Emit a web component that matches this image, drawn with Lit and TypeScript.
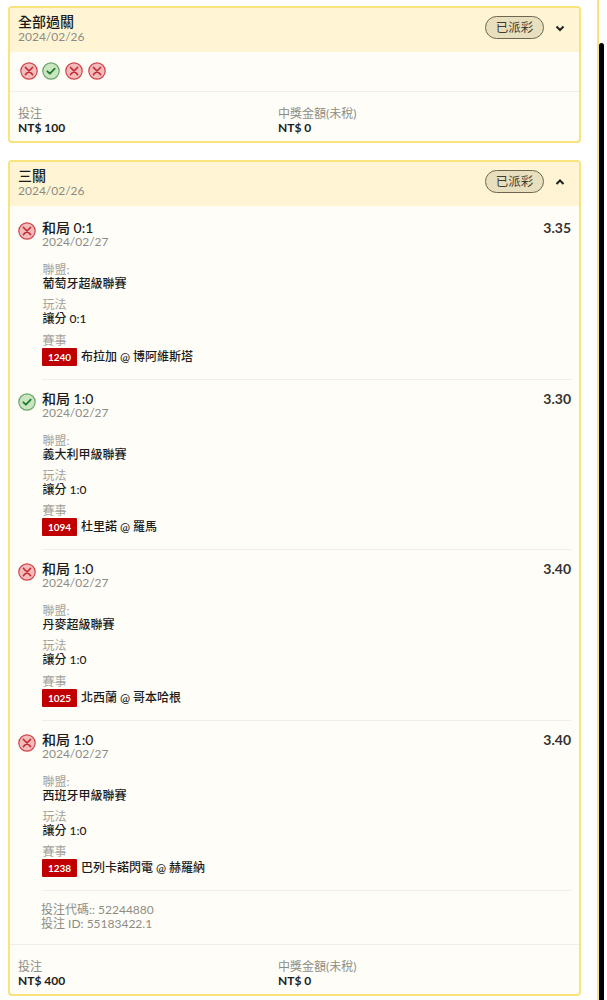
import { LitElement, html, css, svg } from "lit";
import { customElement } from "lit/decorators.js";

const ICON_X = svg`<circle cx="9" cy="9" r="8.2" fill="#f3bcbc" stroke="#d0454c" stroke-width="1.2"/><path d="M5.4 5.4l7.2 7.2M12.6 5.4l-7.2 7.2" fill="none" stroke="#c42f37" stroke-width="1.5" stroke-linecap="round"/>`;
const ICON_OK = svg`<circle cx="9" cy="9" r="8.2" fill="#c9e6c1" stroke="#6aa56c" stroke-width="1.2"/><path d="M5.4 9.3l2.5 2.4 4.8-5" fill="none" stroke="#1f7a2e" stroke-width="1.8" stroke-linecap="round" stroke-linejoin="round"/>`;

interface Leg { ok: boolean; title: string; odds: string; date: string; league: string; play: string; code: string; match: string; }
const LEGS: Leg[] = [
  { ok: false, title: "和局 0:1", odds: "3.35", date: "2024/02/27", league: "葡萄牙超級聯賽", play: "讓分 0:1", code: "1240", match: "布拉加 @ 博阿維斯塔" },
  { ok: true, title: "和局 1:0", odds: "3.30", date: "2024/02/27", league: "義大利甲級聯賽", play: "讓分 1:0", code: "1094", match: "杜里諾 @ 羅馬" },
  { ok: false, title: "和局 1:0", odds: "3.40", date: "2024/02/27", league: "丹麥超級聯賽", play: "讓分 1:0", code: "1025", match: "北西蘭 @ 哥本哈根" },
  { ok: false, title: "和局 1:0", odds: "3.40", date: "2024/02/27", league: "西班牙甲級聯賽", play: "讓分 1:0", code: "1238", match: "巴列卡諾閃電 @ 赫羅納" },
];

@customElement("app-root")
export class AppRoot extends LitElement {
  static styles = css`
    :host { display: block; position: relative; height: 1000px; overflow: hidden; background: #fff; color: #1c1c1c;
      font-family: Lato, "Noto Sans CJK TC", sans-serif; font-size: 12px; line-height: 14px; }
    .page { width: 573px; margin-left: 8px; padding-top: 6px; display: flex; flex-direction: column; gap: 17px; }
    .card { border: 2px solid #f8e37c; border-radius: 4px; background: #fffdf7; }
    .head { height: 44px; box-sizing: border-box; background: #fff5d5; padding: 6px 8px 0 8px; display: flex; align-items: flex-start; justify-content: space-between; }
    .title { font-size: 14px; line-height: 16px; color: #1a1a1a; font-weight: 500; }
    .date { font-size: 12px; line-height: 13px; color: #8b8b84; }
    .right { display: flex; align-items: center; gap: 10px; padding-top: 2px; }
    .pill { box-sizing: border-box; width: 59px; height: 23px; border: 1px solid #6e6750; border-radius: 12px; background: #e8dfbe;
      font-size: 12.5px; line-height: 21px; text-align: center; color: #3f3c30; }
    .chev { width: 12px; height: 12px; display: block; margin-right: 5px; }
    .icons { display: flex; gap: 4.7px; padding: 10px 9.5px 0; height: 29px; border-bottom: 1px solid #f1eee6; }
    .icons svg { width: 18px; height: 18px; }
    .foot { display: grid; grid-template-columns: 260px 1fr; padding: 15px 8px 7px; }
    .lab { font-size: 12px; line-height: 14px; color: #8d8d86; }
    .val { font-size: 12px; line-height: 13px; font-weight: 700; color: #1c1c1c; }
    .legs { padding: 3px 8px 0 8px; }
    .leg { display: flex; gap: 6.5px; }
    .leg > svg { width: 18px; height: 18px; flex: none; margin: 13px 0 0 -0.5px; }
    .body { flex: 1; box-sizing: border-box; padding-top: 11px; height: 170.5px; border-bottom: 1px solid #f1eee6; }
    .row { display: flex; justify-content: space-between; }
    .t2 { font-size: 14px; line-height: 16px; font-weight: 500; color: #1a1a1a; }
    .odds { font-size: 14px; line-height: 16px; font-weight: 700; color: #333; }
    .d2 { font-size: 12px; line-height: 12px; color: #8d8d86; margin-bottom: 15px; }
    .item { margin-bottom: 7.3px; padding-left: 0.5px; }
    .item .v { line-height: 14px; font-size: 12px; color: #1c1c1c; font-weight: 500; }
    .item .l { line-height: 14px; font-size: 12px; color: #a3a39c; }
    .m { display: flex; align-items: center; gap: 4px; }
    .code { background: #c00000; color: #fff; font-size: 10px; font-weight: 700; width: 35px; height: 18px; line-height: 18px; text-align: center; border-radius: 1px; margin-left: -0.5px; }
    .ids { margin-left: 23px; padding: 11.5px 0 13px; font-size: 12px; line-height: 14px; color: #8d8d86; }
    .divider { border-top: 1px solid #f1eee6; }
    .sb-line { position: absolute; left: 597px; top: 0; bottom: 0; width: 2px; background: #f8e37c; }
    .sb { position: absolute; left: 599px; top: 43px; bottom: 0; width: 5px; background: #000; border-radius: 3px 3px 0 0; }
  `;

  private chev(up: boolean) {
    return html`<svg class="chev" viewBox="0 0 12 12"><path d=${up ? "M2.5 8L6 4.5 9.5 8" : "M2.5 4.5L6 8 9.5 4.5"} fill="none" stroke="#222" stroke-width="2"/></svg>`;
  }
  private head(title: string, up: boolean) {
    return html`<div class="head"><div><div class="title">${title}</div><div class="date">2024/02/26</div></div>
      <div class="right"><div class="pill">已派彩</div>${this.chev(up)}</div></div>`;
  }
  private foot(stake: string) {
    return html`<div class="foot"><div><div class="lab">投注</div><div class="val">${stake}</div></div>
      <div><div class="lab">中獎金額(未稅)</div><div class="val">NT$ 0</div></div></div>`;
  }
  render() {
    return html`<div class="page">
      <section class="card">
        ${this.head("全部過關", false)}
        <div class="icons">${[false, true, false, false].map((o) => html`<svg viewBox="0 0 18 18">${o ? ICON_OK : ICON_X}</svg>`)}</div>
        ${this.foot("NT$ 100")}
      </section>
      <section class="card">
        ${this.head("三關", true)}
        <div class="legs">
          ${LEGS.map((l) => html`<div class="leg">
            <svg viewBox="0 0 18 18">${l.ok ? ICON_OK : ICON_X}</svg>
            <div class="body">
              <div class="row"><div class="t2">${l.title}</div><div class="odds">${l.odds}</div></div>
              <div class="d2">${l.date}</div>
              <div class="item"><div class="l">聯盟:</div><div class="v">${l.league}</div></div>
              <div class="item"><div class="l">玩法</div><div class="v">${l.play}</div></div>
              <div class="item"><div class="l">賽事</div><div class="m"><span class="code">${l.code}</span><span class="v">${l.match}</span></div></div>
            </div>
          </div>`)}
          <div class="ids">投注代碼:: 52244880<br />投注 ID: 55183422.1</div>
        </div>
        <div class="divider"></div>
        ${this.foot("NT$ 400")}
      </section>
    </div>
    <div class="sb-line"></div><div class="sb"></div>`;
  }
}
